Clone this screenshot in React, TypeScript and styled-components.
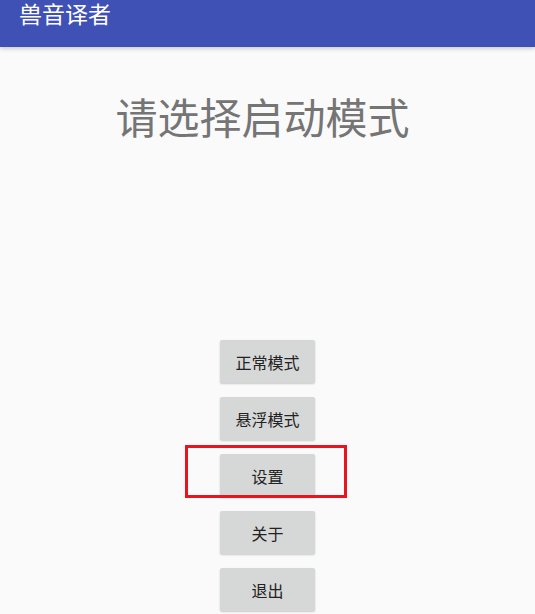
import React from 'react';
import styled, { createGlobalStyle } from 'styled-components';

const GlobalStyle = createGlobalStyle`
  html, body {
    margin: 0;
    padding: 0;
    background: #fafafa;
    font-family: Roboto, "Noto Sans CJK SC", sans-serif;
  }
`

const Page = styled.div`
  width: 535px;
  height: 614px;
  overflow: hidden;
  background: #fafafa;
  display: flex;
  flex-direction: column;
`

const AppBar = styled.header`
  height: 47px;
  flex-shrink: 0;
  background: #3f51b5;
  box-shadow: 0 2px 4px rgba(0, 0, 0, 0.18);
  position: relative;
  z-index: 1;
  padding: 0 19px;
  box-sizing: border-box;
`

const AppTitle = styled.div`
  color: #fff;
  font-size: 23px;
  line-height: 32px;
`

const Content = styled.main`
  display: flex;
  flex-direction: column;
  align-items: center;
`

const Heading = styled.h1`
  margin: 46px 10px 0 0;
  font-weight: 400;
  font-size: 42px;
  line-height: 54px;
  color: #757575;
`

const ButtonList = styled.div`
  margin-top: 193px;
  display: flex;
  flex-direction: column;
  align-items: center;
  gap: 14px;
`

const Slot = styled.div`
  position: relative;
`

const ModeButton = styled.button`
  width: 95px;
  height: 43px;
  border: 0;
  border-radius: 2px;
  background: #d6d7d7;
  box-shadow: 0 1px 2px rgba(0, 0, 0, 0.2);
  color: #222;
  font-family: Roboto, "Noto Sans CJK SC", sans-serif;
  font-size: 16px;
  padding: 0;
  cursor: pointer;
`

// 参考图里的红色标注框
const Highlight = styled.div`
  position: absolute;
  left: -35px;
  top: -9px;
  width: 162px;
  height: 53px;
  box-sizing: border-box;
  border: 3px solid #e8141e;
  pointer-events: none;
`

const buttons = ['正常模式', '悬浮模式', '设置', '关于', '退出'];

function App() {
  return (
    <Page>
      <GlobalStyle />
      <AppBar>
        <AppTitle>兽音译者</AppTitle>
      </AppBar>
      <Content>
        <Heading>请选择启动模式</Heading>
        <ButtonList>
          {buttons.map((label) => (
            <Slot key={label}>
              <ModeButton>{label}</ModeButton>
              {label === '设置' && <Highlight />}
            </Slot>
          ))}
        </ButtonList>
      </Content>
    </Page>
  );
}

export default App;
